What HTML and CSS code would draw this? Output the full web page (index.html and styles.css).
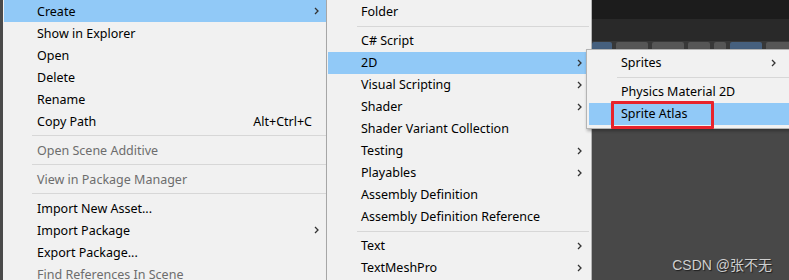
FILE: index.html
```html
<!DOCTYPE html>
<html>
<head>
	<meta charset="utf-8">
	<title>Project context menu</title>
	<link rel="stylesheet" href="styles.css">
</head>
<body>
	<div class="screen">
		<div class="edge"></div>

		<!-- main context menu -->
		<ul class="menu menu_main">
			<li class="menu__item menu__item_active">Create<svg class="menu__arrow" viewBox="0 0 5 8"><polyline points="1,1 4,4 1,7"/></svg></li>
			<li class="menu__item">Show in Explorer</li>
			<li class="menu__item">Open</li>
			<li class="menu__item">Delete</li>
			<li class="menu__item">Rename</li>
			<li class="menu__item">Copy Path<span class="menu__key">Alt+Ctrl+C</span></li>
			<li class="menu__sep"></li>
			<li class="menu__item menu__item_off">Open Scene Additive</li>
			<li class="menu__sep"></li>
			<li class="menu__item menu__item_off">View in Package Manager</li>
			<li class="menu__sep"></li>
			<li class="menu__item">Import New Asset...</li>
			<li class="menu__item">Import Package<svg class="menu__arrow" viewBox="0 0 5 8"><polyline points="1,1 4,4 1,7"/></svg></li>
			<li class="menu__item">Export Package...</li>
			<li class="menu__item menu__item_off">Find References In Scene</li>
		</ul>

		<!-- Create submenu -->
		<ul class="menu menu_sub">
			<li class="menu__item">Folder</li>
			<li class="menu__sep"></li>
			<li class="menu__item">C# Script</li>
			<li class="menu__item menu__item_active">2D<svg class="menu__arrow" viewBox="0 0 5 8"><polyline points="1,1 4,4 1,7"/></svg></li>
			<li class="menu__item">Visual Scripting<svg class="menu__arrow" viewBox="0 0 5 8"><polyline points="1,1 4,4 1,7"/></svg></li>
			<li class="menu__item">Shader<svg class="menu__arrow" viewBox="0 0 5 8"><polyline points="1,1 4,4 1,7"/></svg></li>
			<li class="menu__item">Shader Variant Collection</li>
			<li class="menu__item">Testing<svg class="menu__arrow" viewBox="0 0 5 8"><polyline points="1,1 4,4 1,7"/></svg></li>
			<li class="menu__item">Playables<svg class="menu__arrow" viewBox="0 0 5 8"><polyline points="1,1 4,4 1,7"/></svg></li>
			<li class="menu__item">Assembly Definition</li>
			<li class="menu__item">Assembly Definition Reference</li>
			<li class="menu__sep"></li>
			<li class="menu__item">Text<svg class="menu__arrow" viewBox="0 0 5 8"><polyline points="1,1 4,4 1,7"/></svg></li>
			<li class="menu__item">TextMeshPro<svg class="menu__arrow" viewBox="0 0 5 8"><polyline points="1,1 4,4 1,7"/></svg></li>
		</ul>

		<!-- editor behind the menus -->
		<div class="editor">
			<div class="editor__title"></div>
			<div class="editor__tabs"></div>
			<div class="editor__tools">
				<span class="tool tool_on" style="width: 20px"></span>
				<span class="tool" style="width: 32px"></span>
				<span class="tool" style="width: 32px"></span>
				<span class="tool" style="width: 22px"></span>
				<span class="tool" style="width: 12px"></span>
				<span class="tool tool_on" style="width: 32px"></span>
				<span class="tool" style="width: 32px"></span>
			</div>
			<div class="editor__body"></div>
		</div>

		<!-- 2D submenu -->
		<ul class="menu menu_pop">
			<li class="menu__item">Sprites<svg class="menu__arrow" viewBox="0 0 5 8"><polyline points="1,1 4,4 1,7"/></svg></li>
			<li class="menu__sep"></li>
			<li class="menu__item">Physics Material 2D</li>
			<li class="menu__item menu__item_active">Sprite Atlas<span class="mark"></span></li>
		</ul>

		<div class="watermark">CSDN @张不无</div>
	</div>
</body>
</html>
```

FILE: styles.css
```css
* { box-sizing: border-box; }

body {
	margin: 0;
	background-color: #474747;
	font-size: 12.5px;
	font-family: "Noto Sans", "Noto Sans CJK SC", sans-serif;
}

.screen {
	display: flex;
	position: relative;
	width: 789px;
	height: 280px;
	overflow: hidden;
}

.edge {
	width: 3px;
	flex: none;
	background-color: #4a4a4a;
}


.menu {
	margin: 0;
	padding: 0;
	list-style: none;
	flex: none;
	background-color: #f1f1f1;
	color: #000;
}
	.menu_main {
		width: 324px;
		height: 300px;
		border-right: 1px solid #a9a9a9;
	}
	.menu_sub {
		width: 265px;
		height: 300px;
		padding: 1px 0 0 1px;
		border-right: 1px solid #b4b4b4;
		box-shadow: 2px 0 3px rgba(0,0,0,.35);
	}
	.menu_pop {
		top: 49px;
		left: 586px;
		width: 220px;
		padding: 2px 0 3px 2px;
		position: absolute;
		border: 1px solid #b4b4b4;
		box-shadow: 1px 2px 3px rgba(0,0,0,.3);
	}

	.menu__item {
		height: 22px;
		line-height: 22px;
		position: relative;
		padding-left: 33px;
		white-space: nowrap;
	}
	.menu_main .menu__item {
		margin-left: 1px;
		padding-top: 1px;
		line-height: 21px;
	}
	.menu_pop .menu__item { padding-left: 32px; }

		.menu__item_active { background-color: #91c9f7; }
		.menu__item_off { color: #6d6d6d; }

	.menu__arrow {
		top: 7px;
		right: 7px;
		width: 5px;
		height: 8px;
		position: absolute;
		fill: none;
		stroke: #333;
		stroke-width: 1.3;
	}
	.menu_sub .menu__arrow { right: 9px; }
	.menu_pop .menu__arrow { right: 29px; }

	.menu__key {
		top: 1px;
		right: 14px;
		position: absolute;
	}

	.menu__sep {
		height: 7px;
		padding-top: 3px;
		margin-left: 29px;
	}
		.menu__sep::after {
			content: "";
			display: block;
			height: 1px;
			background-color: #d7d7d7;
		}
	.menu_sub .menu__sep { margin-left: 29px; margin-right: 2px; }
	.menu_pop .menu__sep { margin-left: 28px; }

/* red annotation around the picked item */
.mark {
	top: -2px;
	left: 22px;
	width: 103px;
	height: 28px;
	position: absolute;
	border: 3px solid #e8232b;
	border-radius: 1px;
}


.editor {
	flex: 1;
	display: flex;
	flex-direction: column;
}
	.editor__title {
		height: 19px;
		background-color: #1c1c1c;
	}
	.editor__tabs {
		height: 22px;
		background-color: #292929;
	}
	.editor__tools {
		height: 12px;
		display: flex;
		gap: 4px;
		padding-top: 1px;
		background-color: #383838;
	}
		.tool {
			height: 14px;
			border-radius: 2px;
			background-color: #565656;
		}
		.tool_on { background-color: #46607e; }
	.editor__body {
		flex: 1;
		background-color: #484848;
	}

.watermark {
	right: 17px;
	bottom: 6px;
	position: absolute;
	color: #cfcfcf;
	font-size: 14px;
	font-family: "Liberation Sans", "Noto Sans CJK SC", sans-serif;
	text-shadow: 1px 1px 1px rgba(0,0,0,.6);
}
```
